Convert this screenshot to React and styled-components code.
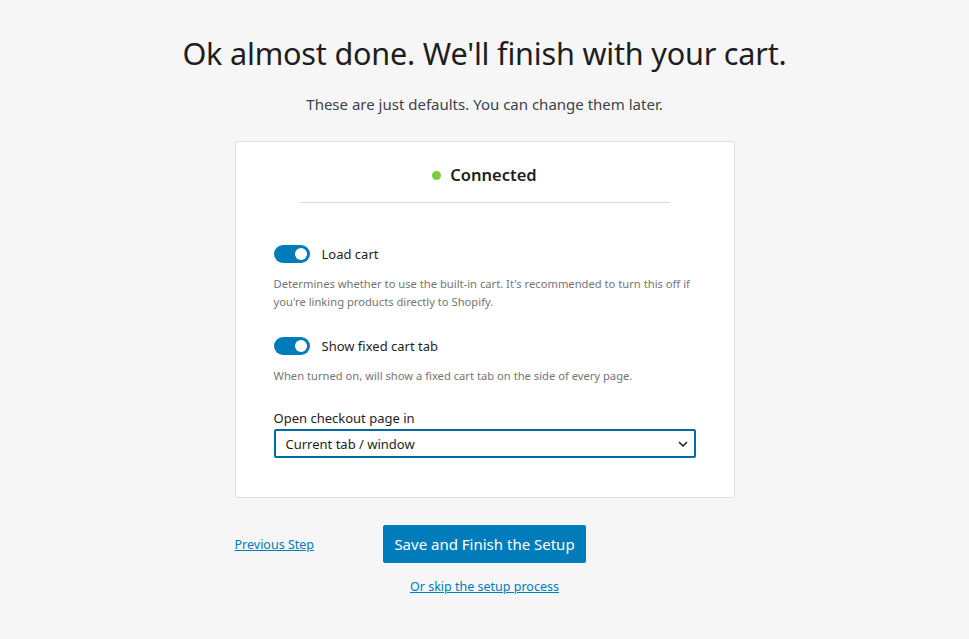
import React, { useState } from 'react'
import styled, { createGlobalStyle } from 'styled-components'

const GlobalStyle = createGlobalStyle`
  html, body {
    margin: 0;
    padding: 0;
    background: #f6f6f6;
  }
  body {
    font-family: "Noto Sans", "Open Sans", sans-serif;
    color: #1e1e1e;
  }
`

const Page = styled.div`
  display: flex;
  flex-direction: column;
  align-items: center;
  padding-top: 33px;
  min-height: 639px;
  box-sizing: border-box;
`

const Title = styled.h1`
  margin: 0;
  font-size: 30.6px;
  font-weight: 400;
  line-height: 40px;
  color: #1e1e1e;
  letter-spacing: -0.2px;
`

const Subtitle = styled.p`
  margin: 21px 0 0;
  font-size: 15px;
  line-height: 20px;
  color: #3c434a;
`

const Card = styled.div`
  margin-top: 27px;
  width: 500px;
  box-sizing: border-box;
  background: #fff;
  border: 1px solid #e0e0e0;
  border-radius: 2px;
  padding: 21px 38px 39px;
`

const Status = styled.div`
  display: flex;
  justify-content: center;
  align-items: center;
  gap: 9px;
  font-size: 16.5px;
  font-weight: 600;
  color: #1e1e1e;
  line-height: 24px;
`

const Dot = styled.span`
  width: 9px;
  height: 9px;
  border-radius: 50%;
  background: #7ad03a;
`

const Divider = styled.hr`
  width: 371px;
  margin: 15px auto 0;
  border: none;
  border-top: 1px solid #dcdcde;
`

const Setting = styled.div`
  margin-top: ${p => p.$top}px;
`

const ToggleRow = styled.label`
  display: flex;
  align-items: center;
  gap: 12px;
  font-size: 13px;
  color: #1e1e1e;
  line-height: 18px;
  cursor: pointer;
`

const Track = styled.span`
  position: relative;
  width: 36px;
  height: 18px;
  border-radius: 9px;
  background: ${p => (p.$on ? '#007cba' : '#ccc')};
  flex-shrink: 0;
`

const Knob = styled.span`
  position: absolute;
  top: 3px;
  left: ${p => (p.$on ? '21px' : '3px')};
  width: 12px;
  height: 12px;
  border-radius: 50%;
  background: #fff;
`

const Help = styled.p`
  margin: 12px 0 0;
  font-size: 11.2px;
  line-height: 18px;
  color: #757575;
`

const FieldLabel = styled.div`
  margin-top: 24px;
  font-size: 13px;
  line-height: 18px;
  color: #1e1e1e;
`

const SelectBox = styled.div`
  margin-top: 2px;
  height: 29px;
  box-sizing: border-box;
  border: 2px solid #006ba1;
  border-radius: 2px;
  display: flex;
  align-items: center;
  justify-content: space-between;
  padding: 0 6px 0 10px;
  font-size: 13px;
  color: #1e1e1e;
`

const Actions = styled.div`
  margin-top: 27px;
  width: 500px;
  display: grid;
  grid-template-columns: 1fr auto 1fr;
  align-items: center;
`

const TextLink = styled.a`
  font-size: 12.5px;
  color: #007cba;
  text-decoration: underline;
  cursor: pointer;
`

const PrimaryButton = styled.button`
  height: 38px;
  padding: 0 11px;
  border: none;
  border-radius: 2px;
  background: #007cba;
  color: #fff;
  font-family: inherit;
  font-size: 15px;
  cursor: pointer;
`

const SkipLink = styled(TextLink)`
  margin-top: 15px;
`

function Toggle({ label, on, onChange }) {
  return (
    <ToggleRow onClick={onChange}>
      <Track $on={on}>
        <Knob $on={on} />
      </Track>
      {label}
    </ToggleRow>
  )
}

export default function App() {
  const [loadCart, setLoadCart] = useState(true)
  const [fixedTab, setFixedTab] = useState(true)

  return (
    <>
      <GlobalStyle />
      <Page>
        <Title>Ok almost done. We'll finish with your cart.</Title>
        <Subtitle>These are just defaults. You can change them later.</Subtitle>

        <Card>
          <Status>
            <Dot />
            Connected
          </Status>
          <Divider />

          <Setting $top={42}>
            <Toggle label="Load cart" on={loadCart} onChange={() => setLoadCart(!loadCart)} />
            <Help>
              Determines whether to use the built-in cart. It's recommended to turn this off if
              you're linking products directly to Shopify.
            </Help>
          </Setting>

          <Setting $top={26}>
            <Toggle label="Show fixed cart tab" on={fixedTab} onChange={() => setFixedTab(!fixedTab)} />
            <Help>When turned on, will show a fixed cart tab on the side of every page.</Help>
          </Setting>

          <FieldLabel>Open checkout page in</FieldLabel>
          <SelectBox>
            Current tab / window
            <svg width="10" height="6" viewBox="0 0 10 6">
              <path d="M1 1l4 4 4-4" fill="none" stroke="#1e1e1e" strokeWidth="1.5" />
            </svg>
          </SelectBox>
        </Card>

        <Actions>
          <TextLink>Previous Step</TextLink>
          <PrimaryButton>Save and Finish the Setup</PrimaryButton>
          <span />
        </Actions>
        <SkipLink>Or skip the setup process</SkipLink>
      </Page>
    </>
  )
}
